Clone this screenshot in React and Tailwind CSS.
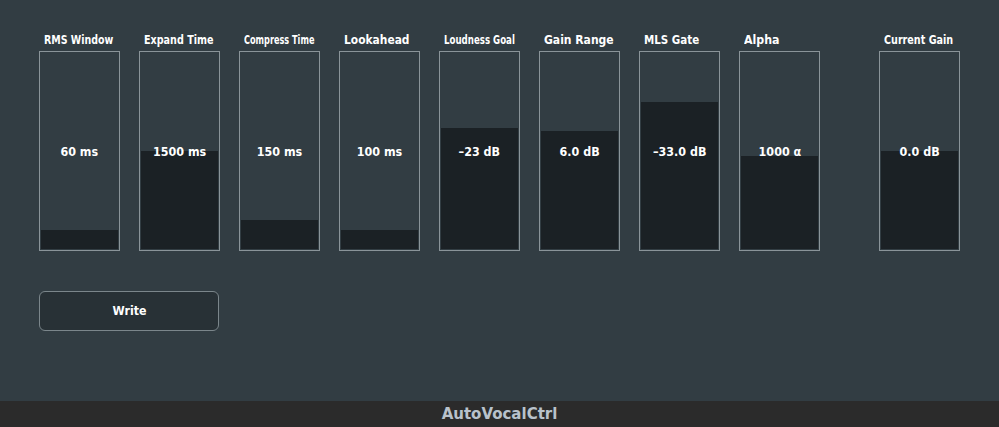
import React from "react";

const sliders = [
  { label: "RMS Window", value: "60 ms", fill: 19, sx: 0.79 },
  { label: "Expand Time", value: "1500 ms", fill: 98, sx: 0.8 },
  { label: "Compress Time", value: "150 ms", fill: 29, sx: 0.68 },
  { label: "Lookahead", value: "100 ms", fill: 19, sx: 0.89 },
  { label: "Loudness Goal", value: "\u201323 dB", fill: 121, sx: 0.72 },
  { label: "Gain Range", value: "6.0 dB", fill: 118, sx: 0.9 },
  { label: "MLS Gate", value: "\u201333.0 dB", fill: 147, sx: 0.86 },
  { label: "Alpha", value: "1000 \u03b1", fill: 93, sx: 0.92 },
];

function Slider({ label, value, fill, sx }) {
  return (
    <div className="flex w-[81px] flex-col">
      <div className="flex h-[18px] items-center whitespace-nowrap pb-[4px] pl-[5px] text-[12px] font-bold text-white">
        <span style={{ transform: `scaleX(${sx})` }} className="inline-block origin-left">
          {label}
        </span>
      </div>
      <div className="relative flex h-[200px] w-[81px] flex-col justify-end border border-[#8a9499] p-px">
        <div className="w-full bg-[#1b2125]" style={{ height: fill }} />
        <div className="absolute inset-0 flex items-center justify-center pt-[2px] text-[12px] font-bold text-white">
          <span className="inline-block scale-x-[0.93]">{value}</span>
        </div>
      </div>
    </div>
  );
}

export default function App() {
  return (
    <div
      className="flex h-[427px] w-[999px] flex-col bg-[#323d43]"
      style={{ fontFamily: '"DejaVu Sans", "Open Sans", sans-serif' }}
    >
      <div className="flex flex-1 flex-col pl-[39px] pt-[33px]">
        <div className="flex">
          <div className="flex gap-[19px]">
            {sliders.map((s) => (
              <Slider key={s.label} {...s} />
            ))}
          </div>
          <div className="ml-[59px]">
            <Slider label="Current Gain" value="0.0 dB" fill={98} sx={0.8} />
          </div>
        </div>
        <button className="mt-[40px] flex h-[40px] w-[180px] items-center justify-center rounded-[6px] border border-[#7b868b] bg-[#283136] text-[12px] font-bold text-white">
          <span className="inline-block scale-x-[0.92]">Write</span>
        </button>
      </div>
      <div className="flex h-[26px] items-center justify-center bg-[#2b2b2b] text-[15px] font-bold text-[#b9c2cb]">
        AutoVocalCtrl
      </div>
    </div>
  );
}
